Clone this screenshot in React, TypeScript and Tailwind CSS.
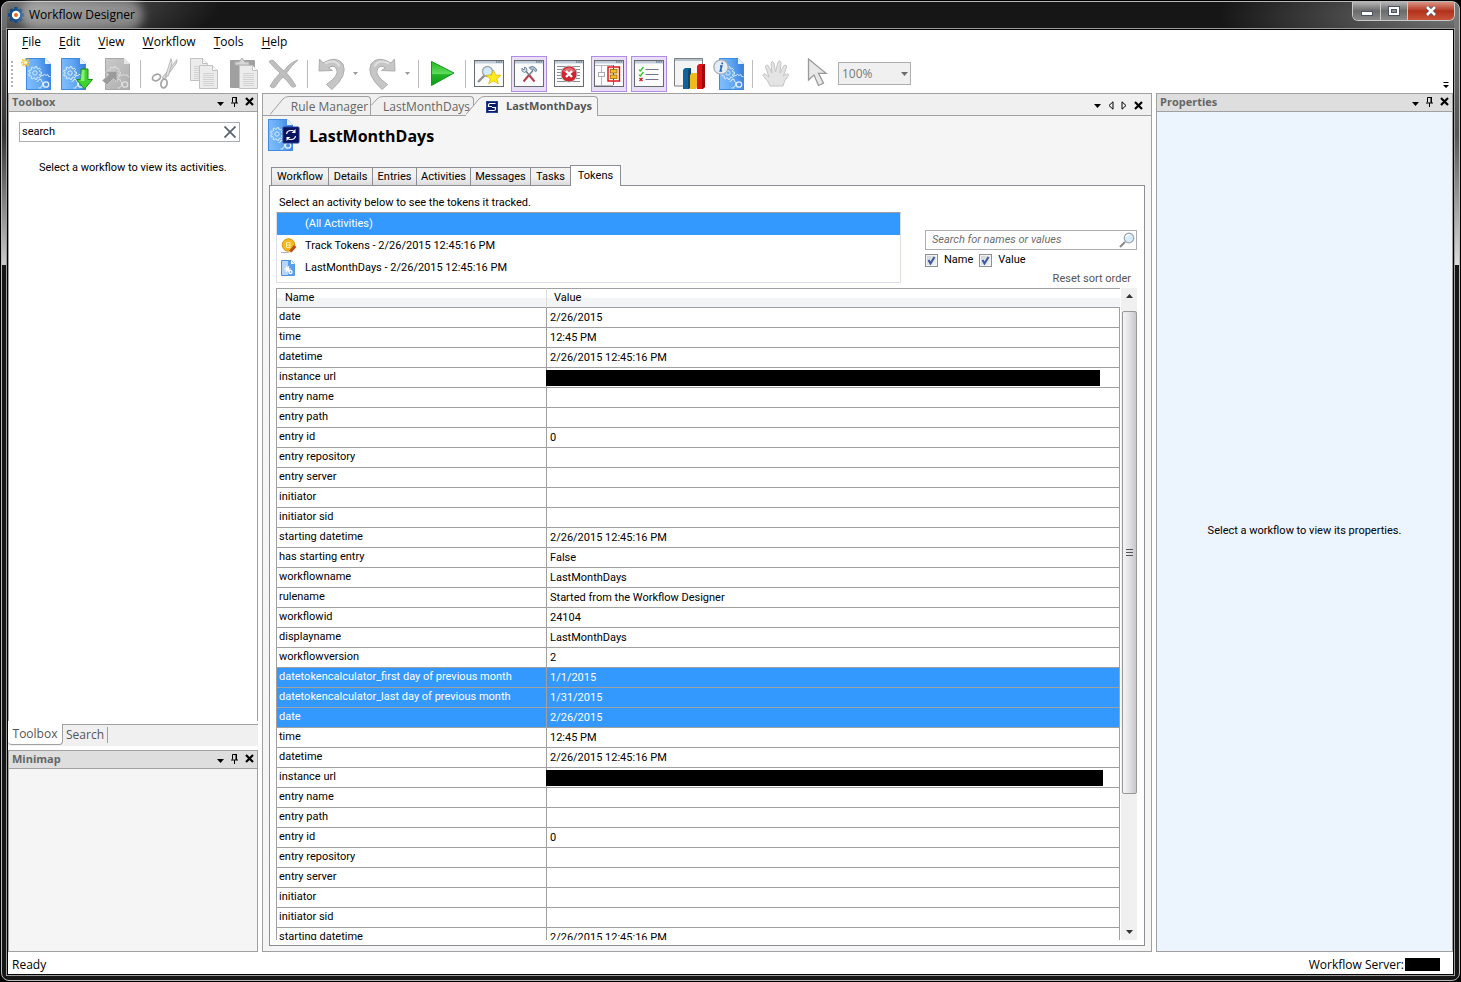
import React from 'react';

type TokenRow = { name: string; value?: string; redacted?: 'short' | 'long'; selected?: boolean };

const startRows: TokenRow[] = [
  { name: 'date', value: '2/26/2015' },
  { name: 'time', value: '12:45 PM' },
  { name: 'datetime', value: '2/26/2015 12:45:16 PM' },
  { name: 'instance url', redacted: 'short' },
  { name: 'entry name' },
  { name: 'entry path' },
  { name: 'entry id', value: '0' },
  { name: 'entry repository' },
  { name: 'entry server' },
  { name: 'initiator' },
  { name: 'initiator sid' },
  { name: 'starting datetime', value: '2/26/2015 12:45:16 PM' },
  { name: 'has starting entry', value: 'False' },
  { name: 'workflowname', value: 'LastMonthDays' },
  { name: 'rulename', value: 'Started from the Workflow Designer' },
  { name: 'workflowid', value: '24104' },
  { name: 'displayname', value: 'LastMonthDays' },
  { name: 'workflowversion', value: '2' },
];

const rows: TokenRow[] = [
  ...startRows,
  { name: 'datetokencalculator_first day of previous month', value: '1/1/2015', selected: true },
  { name: 'datetokencalculator_last day of previous month', value: '1/31/2015', selected: true },
  { name: 'date', value: '2/26/2015', selected: true },
  { name: 'time', value: '12:45 PM' },
  { name: 'datetime', value: '2/26/2015 12:45:16 PM' },
  { name: 'instance url', redacted: 'long' },
  ...startRows.slice(4, 12),
];

const menus = ['File', 'Edit', 'View', 'Workflow', 'Tools', 'Help'];

const detailTabs = [
  { label: 'Workflow', width: 'w-[57px]' },
  { label: 'Details', width: 'w-[44px]' },
  { label: 'Entries', width: 'w-[44px]' },
  { label: 'Activities', width: 'w-[54px]' },
  { label: 'Messages', width: 'w-[60px]' },
  { label: 'Tasks', width: 'w-[40px]' },
];

/* ---------- icons ---------- */

const gearPath = (cx: number, cy: number, r: number, teeth: number) => {
  const points: string[] = [];
  for (let i = 0; i < teeth; i++) {
    [[-0.3, r - 1.5], [-0.2, r], [0.2, r], [0.3, r - 1.5]].forEach(([shift, radius]) => {
      const a = ((i + shift) / teeth) * Math.PI * 2;
      points.push(`${(cx + Math.cos(a) * radius).toFixed(2)} ${(cy + Math.sin(a) * radius).toFixed(2)}`);
    });
  }
  return `M${points.join('L')}z`;
};

const DocShape = ({ gray = false }: { gray?: boolean }) => (
  <g>
    <defs>
      <linearGradient id="docBlue" x1="0" y1=".3" x2="1" y2=".1">
        <stop offset="0" stopColor="#7dbcfc" />
        <stop offset=".5" stopColor="#5fa5f2" />
        <stop offset="1" stopColor="#2f78dc" />
      </linearGradient>
      <linearGradient id="docGray" x1="0" y1="0" x2="1" y2="1">
        <stop offset="0" stopColor="#cbcbcb" />
        <stop offset="1" stopColor="#acacac" />
      </linearGradient>
    </defs>
    <path d="M0 0h19l6 6v26H0z" fill={gray ? 'url(#docGray)' : 'url(#docBlue)'} />
    <path d="M.5 31.500V.5H19M24.500 6.500v25H.5" fill="none" stroke={gray ? '#a9a9a9' : '#3f8ae2'} />
    <path d="M19 0l6 6h-6z" fill={gray ? '#e6e6e6' : '#e4f1ff'} />
    <g fill="none" stroke={gray ? '#e0e0e0' : '#e2f0ff'} strokeWidth=".9">
      <path d={gearPath(9, 15, 6.500, 9)} />
      <circle cx="9" cy="15" r="2.200" />
      <path d="M14.500 19l.5-2 2 .8 1.200-1.600 1.800 1.300 1.800-1 .8 2 1.900.2" />
      <path d="M10.500 23.500l2-.5.5-1.800 2.200.3.300 2 1.500 1-.8 1.500.8 1.700-1.900.8-.6 1.700-2-.3" />
      <circle cx="20" cy="26.500" r="2.700" strokeWidth="1.300" />
    </g>
  </g>
);

const NewIcon = () => (
  <svg width="32" height="32" viewBox="0 0 32 32">
    <g transform="translate(5 0)"><DocShape /></g>
    <path d="M4.500 0v9M0 4.500h9M1.300 1.300l6.400 6.400M7.700 1.300L1.300 7.700" stroke="#f0c43c" strokeWidth="1.6" />
    <circle cx="4.500" cy="4.500" r="1.800" fill="#fff3b0" />
  </svg>
);

const DownloadIcon = () => (
  <svg width="32" height="32" viewBox="0 0 32 32">
    <DocShape />
    <path d="M20 11h7v10.500h4.500L23.500 31 15.500 21.500H20z" fill="#3fd32e" stroke="#1d8f1a" />
    <path d="M21 12h2.500v11h-4z" fill="#8af070" />
  </svg>
);

const ExportIcon = () => (
  <svg width="32" height="32" viewBox="0 0 32 32">
    <g transform="translate(4 0)"><DocShape gray /></g>
    <path d="M4 14l12-1v11l-3.500-3.500-6.500 6.500-4.500-4.500 6.500-6z" fill="#9b9b9b" stroke="#c4c4c4" />
  </svg>
);

const CutIcon = () => (
  <svg width="32" height="32" viewBox="0 0 32 32" fill="none">
    <path d="M14 20L29 1.500l-.5 3.500L17 21z" fill="#d9d9d9" stroke="#ababab" strokeWidth=".8" />
    <path d="M17.500 18.500L23 .5l1 4-3.500 13z" fill="#e4e4e4" stroke="#ababab" strokeWidth=".8" />
    <ellipse cx="8.500" cy="19.500" rx="4.200" ry="3" transform="rotate(-25 8.500 19.500)" stroke="#a6a6a6" strokeWidth="1.800" />
    <ellipse cx="16" cy="25.500" rx="3" ry="4.500" transform="rotate(12 16 25.500)" stroke="#a6a6a6" strokeWidth="1.800" />
  </svg>
);

const Sheet = ({ x, y, w, h }: { x: number; y: number; w: number; h: number }) => (
  <g transform={`translate(${x} ${y})`}>
    <path d={`M.5.5h${w - 6}l5 5v${h - 6}H.5z`} fill="#ececec" stroke="#c2c2c2" />
    <path d={`M${w - 5.500}.5v5h5`} fill="#f8f8f8" stroke="#c2c2c2" />
    {[8, 10, 12, 14, 16, 18, 20].filter((n) => n < h - 2).map((n) => (
      <path key={n} d={`M4 ${n}.5h${w - 8}`} stroke="#d2d2d2" />
    ))}
  </g>
);

const CopyIcon = () => (
  <svg width="32" height="32" viewBox="0 0 32 32">
    <Sheet x={2} y={0} w={18} h={23} />
    <Sheet x={11} y={7} w={19} h={24} />
  </svg>
);

const PasteIcon = () => (
  <svg width="32" height="32" viewBox="0 0 32 32">
    <rect x="2" y="2" width="25" height="28" rx="1" fill="#a0a0a0" />
    <path d="M7 7V4h4l3-4 3 4h4v3z" fill="#d6d6d6" stroke="#b0b0b0" />
    <Sheet x={11} y={7} w={19} h={24} />
  </svg>
);

const DeleteIcon = () => (
  <svg width="32" height="32" viewBox="0 0 32 32">
    <path d="M1 3.500q3-2.500 5-.5 5 6 10 10Q22 4 30 2q-6 5-11.500 13Q24 21 28 28q-3 2.500-5 0-4-6-8-9-5 5-8 10-3 2-5-1 4-7 10-13Q6 10 1 3.500z" fill="#bebebe" stroke="#b2b2b2" />
  </svg>
);

const UndoIcon = ({ flip = false }: { flip?: boolean }) => (
  <svg width="32" height="32" viewBox="0 0 32 32">
    <g transform={flip ? 'matrix(-1 0 0 1 32 0)' : undefined}>
      <path d="M4.500 1l3.500 4Q21-3 28 6q5 11-11 25.500l-5.500-5Q25 17 21.500 11q-3-5-8-1l4 2.500L4 13z" fill="#c6c6c6" stroke="#adadad" />
      <path d="M10 5.500q11-5 14.500 3" stroke="#e0e0e0" strokeWidth="2" fill="none" />
    </g>
  </svg>
);

const PlayIcon = () => (
  <svg width="26" height="28" viewBox="0 0 26 28">
    <defs>
      <linearGradient id="play" x1="0" y1="0" x2="0" y2="1">
        <stop offset="0" stopColor="#22b522" />
        <stop offset=".5" stopColor="#5fdc5c" />
        <stop offset=".55" stopColor="#21b428" />
        <stop offset="1" stopColor="#0f9a1c" />
      </linearGradient>
    </defs>
    <path d="M2.500 1.500L25 13 2.500 25.500z" fill="url(#play)" stroke="#139a1d" />
  </svg>
);

const WindowIcon = ({ children }: { children?: React.ReactNode }) => (
  <svg width="32" height="32" viewBox="0 0 32 32">
    <rect x="1.500" y="2.500" width="29" height="26" fill="#fcfcfc" stroke="#666b70" />
    <path d="M2 3h28v2H2z" fill="#c3ccd6" />
    <path d="M2 5.500h28" stroke="#dfe5ec" />
    <path d="M23 4h1.500m.8 0h1.500m.8 0h1.500" stroke="#3c5675" strokeWidth="1.200" />
    {children}
  </svg>
);

const Magnifier = () => (
  <svg width="16" height="16" viewBox="0 0 16 16">
    <path d="M1 15l5-5" stroke="#8b8b8b" strokeWidth="2.200" />
    <circle cx="10" cy="6" r="4.800" fill="#d8ecfb" stroke="#9aa5b1" strokeWidth="1.2" />
    <path d="M7 5q1-2.500 4-2" stroke="#fff" fill="none" strokeWidth="1.3" />
  </svg>
);

const FindWindowIcon = () => (
  <WindowIcon>
    <path d="M5 24l7-7" stroke="#909090" strokeWidth="2.400" />
    <circle cx="14.500" cy="13.500" r="5" fill="#d3eafb" stroke="#9aa7b5" strokeWidth="1.400" />
    <path d="M20.500 12l2 5 5.500.3-4.200 3.500 1.500 5-4.800-3-4.800 3 1.500-5L13 17.300l5.500-.3z" fill="#ffeb1c" stroke="#e0bd00" strokeWidth=".8" />
  </WindowIcon>
);

const ToolsWindowIcon = () => (
  <WindowIcon>
    <path d="M10.500 23.500l6-7" stroke="#b93a4a" strokeWidth="2" />
    <path d="M16.500 16.500l3.500-4" stroke="#6d7b8a" strokeWidth="1.500" />
    <path d="M21.500 23.500l-5-6" stroke="#b93a4a" strokeWidth="2" />
    <path d="M16.500 17.500L12 12" stroke="#6d7b8a" strokeWidth="1.500" />
    <path d="M16 9.500q4-2.500 6.500.5l1.500 2.500-1.500 1.200-2-2.200-1.500 1z" fill="#a9bfd3" stroke="#5d7287" strokeWidth=".8" />
    <path d="M9 10v3l2.500 1.500 2.500-1.500-.5-3-2-1v2.500h-1.500z" fill="#d5dfe9" stroke="#5d7287" strokeWidth=".8" />
  </WindowIcon>
);

const ErrorWindowIcon = () => (
  <WindowIcon>
    <path d="M4 8.500h23M4 11.500h23M4 14.500h23M4 17.500h23M4 20.500h23M4 23.500h23" stroke="#8c9096" />
    <circle cx="16" cy="16" r="8" fill="#cf2430" stroke="#b8b8b8" />
    <path d="M9.500 13q6.500-7 13 0-6.500 4-13 0z" fill="#ee8c8c" opacity=".7" />
    <path d="M13 13l6 6m0-6l-6 6" stroke="#fff" strokeWidth="2.400" />
  </WindowIcon>
);

const MapWindowIcon = () => (
  <WindowIcon>
    <path d="M2 7.500h18M8.500 7v8m0 4v8M2 27.500h18" stroke="#b4b7bb" fill="none" />
    <path d="M20.500 7v20" stroke="#6a66a8" />
    <rect x="5.500" y="14.500" width="6" height="4" fill="#fff" stroke="#a9adb3" />
    <rect x="15" y="9" width="11.500" height="14" fill="#fdf4e0" stroke="#e30613" strokeWidth="1.400" />
    <path d="M20.500 9.800v12.500" stroke="#3d3d8e" />
    <rect x="17.500" y="11.500" width="6.500" height="3.500" fill="#f3bd2a" stroke="#9c6a00" strokeWidth=".8" />
    <rect x="17.500" y="17" width="6.500" height="3.500" fill="#f3bd2a" stroke="#9c6a00" strokeWidth=".8" />
  </WindowIcon>
);

const ListWindowIcon = () => (
  <WindowIcon>
    <path d="M12.500 11.500h13M12.500 16.500h13M12.500 21.500h13" stroke="#77708f" />
    <path d="M6 11.500l1.200 1.500L10.500 9M6 16.500l1.200 1.500L10.500 14" stroke="#25c81d" strokeWidth="1.200" fill="none" />
    <path d="M6.500 20l3 3M9.500 20l-3 3" stroke="#d8141c" strokeWidth="1.300" />
  </WindowIcon>
);

const ChartIcon = () => (
  <svg width="34" height="32" viewBox="0 0 34 32">
    <path d="M2.500.5h28V28h-28z" fill="#f4f4f4" stroke="#7a8086" />
    <path d="M3 1h27v2H3z" fill="#b9c4cf" />
    <path d="M11 12l2-2h6v19l-2 2h-6z" fill="#0e639c" />
    <path d="M16 12l3-2v19l-3 2z" fill="#0a4770" />
    <path d="M18 17l2-2h5v14l-1 2h-6z" fill="#f0b91c" />
    <path d="M25 8l2-2h6v23l-2 2h-6z" fill="#e31219" />
    <path d="M30 8l3-2v23l-3 2z" fill="#9c0b10" />
  </svg>
);

const InfoIcon = () => (
  <svg width="32" height="32" viewBox="0 0 32 32">
    <g transform="translate(6 0)"><DocShape /></g>
    <circle cx="8" cy="9" r="7.200" fill="#e4ecf4" stroke="#a5adb5" strokeWidth="1.300" />
    <path d="M9.200 4.500v1.800M7 8.200h1.700L7.300 13h1.800" stroke="#2569b3" strokeWidth="1.700" fill="none" />
  </svg>
);

const HandIcon = () => (
  <svg width="30" height="30" viewBox="0 0 30 30">
    <path d="M9 27Q7 21 2.500 17.500q-1.500-3 1.500-2.500l4 3L4.500 8q.3-2.800 2.700-1.500L11 14 10 4q1-3 3 0l1.500 9L17 3q2-2.500 3 .5L19 14l4-7.500q2.500-1.200 2.500 1.500L22.500 17l3-2q3-.5 1.500 2.500Q23 21 22 27z" fill="#e4e4e4" stroke="#c4c4c4" />
  </svg>
);

const PointerIcon = () => (
  <svg width="24" height="32" viewBox="0 0 24 32">
    <path d="M4.500 1v21l5.500-5 4.500 10.500 5-2.200-5-10H22z" fill="#e8e8e8" stroke="#999" strokeWidth="1.300" />
  </svg>
);

const AppIcon = () => (
  <svg width="16" height="16" viewBox="0 0 16 16">
    <g fill="#0f4c88">
      <circle cx="8" cy="8" r="6.200" />
      {[0, 45, 90, 135].map((a) => (
        <rect key={a} x="6.300" y="0" width="3.400" height="16" transform={`rotate(${a} 8 8)`} />
      ))}
    </g>
    <circle cx="8" cy="8" r="4.200" fill="#fff" />
    <circle cx="8" cy="8" r="2" fill="#e8641b" />
  </svg>
);

const SyncIcon = () => (
  <svg width="12" height="12" viewBox="0 0 12 12">
    <rect width="12" height="12" rx="1" fill="#0a1c66" />
    <rect x=".5" y=".5" width="11" height="11" rx="1" fill="none" stroke="#25459b" />
    <path d="M9.500 2.500H4q-1.500 0-1.500 1.500v1.500H6M2.500 9.500H8q1.500 0 1.500-1.500V6.500H6" stroke="#fff" strokeWidth="1.200" fill="none" />
  </svg>
);

const WorkflowBadge = () => (
  <svg width="32" height="34" viewBox="0 0 32 34" className="shrink-0">
    <DocShape />
    <rect x="15" y="8" width="16" height="16" rx="1" fill="#0a1460" stroke="#1d3990" />
    <path d="M18.500 15q.5-3.500 4.500-3.500h2.500M27.500 17q-.5 3.500-4.500 3.500h-2.500" stroke="#fff" strokeWidth="1.200" fill="none" />
    <path d="M27.500 10v4H23.500zM18.500 22v-4h4z" fill="#fff" />
  </svg>
);

const TokenIcon = () => (
  <svg width="16" height="16" viewBox="0 0 16 16">
    <path d="M0 14.500h8" stroke="#b5b5b5" />
    <circle cx="7.500" cy="7" r="6.300" fill="#f6b81d" stroke="#d39a10" />
    <path d="M5.500 4.500h3.500v5H5.500zM5.500 7H9" stroke="#fff0b0" fill="none" />
    <path d="M8 13l5-6 2.500 2-5 5.500z" fill="#b9501c" />
    <path d="M8 13l2.500 1.500-3 .8z" fill="#f4ddb8" />
  </svg>
);

const SmallDocIcon = () => (
  <svg width="14" height="16" viewBox="0 0 14 16">
    <path d="M.5.5H10L13.500 4v11.500H.5z" fill="#b5d6f8" stroke="#4a90dc" />
    <path d="M7 .5h3L13.500 4v11.500H7z" fill="#5b9fe8" />
    <path d="M10 .5V4h3.500z" fill="#fff" />
    <path d={gearPath(6.500, 9, 3.200, 6)} fill="#fff" />
    <circle cx="9.500" cy="12" r="2.200" fill="#fff" />
    <circle cx="9.500" cy="12" r=".8" fill="#3b82d6" />
  </svg>
);

const DownArrow = ({ color = '#000' }: { color?: string }) => (
  <svg width="7" height="4" viewBox="0 0 7 4"><path d="M0 0h7L3.500 4z" fill={color} /></svg>
);

const CrossIcon = () => (
  <svg width="9" height="9" viewBox="0 0 9 9"><path d="M1 1l7 7M8 1L1 8" stroke="#000" strokeWidth="2.200" /></svg>
);

/* ---------- pieces ---------- */

const PanelHeader: React.FC<{ title: string }> = ({ title }) => (
  <div className="flex h-[19px] shrink-0 items-center border border-[#a0a0a0] bg-[#dedede] pr-[3px] pb-[2px] pl-[3px]">
    <h2 className="flex-1 text-[11px] leading-4 font-bold text-[#666]">{title}</h2>
    <div className="flex items-center gap-[6px]">
      <button type="button" aria-label={`${title} options`} className="pt-1"><DownArrow /></button>
      <button type="button" aria-label={`Pin ${title}`}>
        <svg width="9" height="10" viewBox="0 0 9 10">
          <path d="M2.500 5.500v-5h4v5M1 6h7M4.500 6v4" stroke="#000" fill="none" />
          <path d="M5.500 0h1.500v6H5.500z" />
        </svg>
      </button>
      <button type="button" aria-label={`Close ${title}`}><CrossIcon /></button>
    </div>
  </div>
);

const ToolButton: React.FC<{ label: string; active?: boolean; children: React.ReactNode }> = ({ label, active, children }) => (
  <button
    type="button"
    aria-label={label}
    className={`flex size-9 shrink-0 items-center justify-center ${active ? 'border border-[#b18ce6] bg-[#e8def5]' : ''}`}
  >
    {children}
  </button>
);

const Separator = () => (
  <div className="flex w-[3px] shrink-0 justify-center"><div className="h-7 w-px bg-[#bcbcbc]" /></div>
);

const HistoryArrow: React.FC<{ label: string }> = ({ label }) => (
  <button type="button" aria-label={label} className="flex w-2 shrink-0 justify-start">
    <svg width="5" height="3" viewBox="0 0 5 3"><path d="M0 0h5L2.500 3z" fill="#999" /></svg>
  </button>
);

const TitleBar = () => (
  <header className="flex h-[26px] shrink-0 items-center justify-between">
    <div className="flex items-center gap-[5px] pl-[2px]">
      <AppIcon />
      <h1 className="rounded-full bg-white/40 text-xs leading-4 text-black shadow-[0_0_10px_8px_rgba(255,255,255,0.4)]">Workflow Designer</h1>
    </div>
    <div className="flex h-[19px] self-start overflow-hidden rounded-b-md border border-t-0 border-[#c9c9c9]">
      <button type="button" aria-label="Minimize" className="flex w-7 items-center justify-center border-r border-[#c9c9c9] bg-linear-to-b from-[#b5b5b5] via-[#6a6a6a] via-50% to-[#8a8a8a] pt-1">
        <svg width="12" height="5" viewBox="0 0 12 5"><rect x=".5" y=".5" width="11" height="4" fill="#fff" stroke="#4b5260" /></svg>
      </button>
      <button type="button" aria-label="Maximize" className="flex w-[27px] items-center justify-center border-r border-[#c9c9c9] bg-linear-to-b from-[#b5b5b5] via-[#6a6a6a] via-50% to-[#8a8a8a]">
        <svg width="12" height="10" viewBox="0 0 12 10">
          <rect x=".5" y=".5" width="11" height="9" fill="#fff" stroke="#4b5260" />
          <rect x="3.500" y="3.500" width="5" height="3" fill="#8d8d8d" stroke="#4b5260" />
        </svg>
      </button>
      <button type="button" aria-label="Close" className="flex w-[46px] items-center justify-center bg-linear-to-b from-[#d99384] via-[#b3301a] via-50% to-[#c9533a]">
        <svg width="12" height="10" viewBox="0 0 12 10">
          <path d="M2 1l8 8M10 1L2 9" stroke="#4b5260" strokeWidth="4" />
          <path d="M2 1l8 8M10 1L2 9" stroke="#fff" strokeWidth="2.500" />
        </svg>
      </button>
    </div>
  </header>
);

const Toolbar = () => (
  <div className="flex h-[39px] shrink-0 items-center gap-1 bg-white pl-[3px]">
    <div className="mr-[1px] h-[26px] w-[3px] shrink-0 border-l-2 border-dotted border-[#b4b4b4]" />
    <ToolButton label="New workflow"><NewIcon /></ToolButton>
    <ToolButton label="Download workflow"><DownloadIcon /></ToolButton>
    <ToolButton label="Publish"><ExportIcon /></ToolButton>
    <Separator />
    <ToolButton label="Cut"><CutIcon /></ToolButton>
    <ToolButton label="Copy"><CopyIcon /></ToolButton>
    <ToolButton label="Paste"><PasteIcon /></ToolButton>
    <ToolButton label="Delete"><DeleteIcon /></ToolButton>
    <Separator />
    <ToolButton label="Undo"><UndoIcon /></ToolButton>
    <HistoryArrow label="Undo history" />
    <ToolButton label="Redo"><UndoIcon flip /></ToolButton>
    <HistoryArrow label="Redo history" />
    <Separator />
    <ToolButton label="Run"><PlayIcon /></ToolButton>
    <Separator />
    <ToolButton label="Search pane"><FindWindowIcon /></ToolButton>
    <ToolButton label="Toolbox pane" active><ToolsWindowIcon /></ToolButton>
    <ToolButton label="Errors pane"><ErrorWindowIcon /></ToolButton>
    <ToolButton label="Minimap pane" active><MapWindowIcon /></ToolButton>
    <ToolButton label="Properties pane" active><ListWindowIcon /></ToolButton>
    <ToolButton label="Statistics"><ChartIcon /></ToolButton>
    <ToolButton label="Workflow information"><InfoIcon /></ToolButton>
    <Separator />
    <ToolButton label="Pan"><HandIcon /></ToolButton>
    <ToolButton label="Select"><PointerIcon /></ToolButton>
    <div className="relative flex items-center">
      <select aria-label="Zoom" disabled className="h-[23px] w-[73px] appearance-none border border-[#adadad] bg-[#f0f0f0] pl-[3px] text-xs text-[#7a7a7a]">
        <option>100%</option>
      </select>
      <span className="pointer-events-none absolute right-[3px]"><DownArrow color="#6d6d6d" /></span>
    </div>
    <button type="button" aria-label="Toolbar options" className="mr-1 mb-1 ml-auto self-end">
      <svg width="6" height="7" viewBox="0 0 6 7"><path d="M.5 0h5v1h-5zM0 3h6L3 6z" /></svg>
    </button>
  </div>
);

const LeftColumn = () => (
  <aside className="flex w-[250px] shrink-0 flex-col">
    <section className="flex min-h-0 flex-1 flex-col">
      <PanelHeader title="Toolbox" />
      <div className="flex-1 border-r border-l border-[#a0a0a0] bg-white px-[10px] pt-[10px] font-[Roboto,'Liberation_Sans',sans-serif]">
        <div className="flex h-5 w-[221px] items-center border border-[#abadb3] pr-[3px] pl-[2px]">
          <input aria-label="Search activities" defaultValue="search" className="min-w-0 flex-1 text-[11px] leading-4 outline-none" />
          <button type="button" aria-label="Clear search">
            <svg width="12" height="12" viewBox="0 0 12 12"><path d="M.5.5l11 11M11.500.5l-11 11" stroke="#5a6470" strokeWidth="1.800" /></svg>
          </button>
        </div>
        <p className="pt-[18px] pl-5 text-[11px] leading-4">Select a workflow to view its activities.</p>
      </div>
    </section>
    <div role="tablist" className="mt-[3px] mb-1 flex h-[22px] shrink-0 bg-[#f0f0f0] text-xs text-[#555]">
      <button type="button" role="tab" aria-selected="true" className="mb-px w-[55px] rounded-b border-r border-b border-[#a0a0a0] bg-white">Toolbox</button>
      <div className="flex flex-1 items-center border-t border-[#a0a0a0]">
        <button type="button" role="tab" aria-selected="false" className="mb-px h-4 w-[45px] border-r border-[#a0a0a0] leading-4">Search</button>
      </div>
    </div>
    <section className="flex h-[202px] shrink-0 flex-col">
      <PanelHeader title="Minimap" />
      <div className="flex-1 border border-t-0 border-[#a0a0a0] bg-[#f5f5f5]" />
    </section>
  </aside>
);

const DocumentTabs = () => (
  <div className="flex h-[22px] shrink-0 items-end border-b border-[#a0a0a0] bg-[#f0f0f0] pl-[7px] text-xs text-[#666]">
    <button type="button" className="flex h-[19px] items-stretch">
      <svg width="19" height="19" viewBox="0 0 19 19"><path d="M0 18.500L13 3Q15 .5 19 .5" fill="none" stroke="#a0a0a0" /></svg>
      <span className="w-[82px] rounded-tr border-t border-r border-[#a0a0a0] text-center leading-5">Rule Manager</span>
    </button>
    <button type="button" className="flex h-[19px] items-stretch">
      <svg width="12" height="19" viewBox="0 0 12 19"><path d="M0 9.500L6 3Q8 .5 12 .5" fill="none" stroke="#a0a0a0" /></svg>
      <span className="w-[91px] rounded-tr border-t border-r border-[#a0a0a0] text-left leading-5">LastMonthDays</span>
    </button>
    <button type="button" className="-mb-px -ml-2 flex h-5 items-stretch">
      <svg width="19" height="20" viewBox="0 0 19 20"><path d="M0 19L13 3Q15 .5 19 .5V20H0z" fill="#f5f5f5" /><path d="M0 18.500L13 3Q15 .5 19 .5" fill="none" stroke="#a0a0a0" /></svg>
      <span className="flex w-[113px] items-center gap-2 rounded-tr border-t border-r border-[#a0a0a0] bg-[#f5f5f5] pl-px text-[11px] font-bold text-[#555]">
        <SyncIcon />
        LastMonthDays
      </span>
    </button>
    <div className="ml-auto flex items-center gap-[7px] self-center pt-[2px] pr-2">
      <button type="button" aria-label="Document list"><DownArrow /></button>
      <button type="button" aria-label="Scroll tabs left"><svg width="6" height="9" viewBox="0 0 6 9"><path d="M5 .8v7.400L1 4.500z" fill="none" stroke="#000" /></svg></button>
      <button type="button" aria-label="Scroll tabs right"><svg width="6" height="9" viewBox="0 0 6 9"><path d="M1 .8v7.400L5 4.500z" fill="none" stroke="#000" /></svg></button>
      <button type="button" aria-label="Close document"><CrossIcon /></button>
    </div>
  </div>
);

const ActivityPicker = () => (
  <div className="w-[625px] shrink-0">
    <p className="pb-[1px] pl-[3px] leading-4">Select an activity below to see the tokens it tracked.</p>
    <ul className="h-[71px] border border-t-[#a0a0a0] border-r-[#dde0ea] border-b-[#dde0ea] border-l-[#dde0ea] leading-[22px]">
      <li className="flex h-[22px] items-center bg-[#3399ff] pl-7 text-white">(All Activities)</li>
      <li className="flex h-[22px] items-center pl-1"><span className="w-6"><TokenIcon /></span>Track Tokens - 2/26/2015 12:45:16 PM</li>
      <li className="flex h-[22px] items-center pl-1"><span className="w-6"><SmallDocIcon /></span>LastMonthDays - 2/26/2015 12:45:16 PM</li>
    </ul>
  </div>
);

const CheckField: React.FC<{ label: string }> = ({ label }) => (
  <label className="flex items-center gap-[6px]">
    <span className="relative flex size-[13px]">
      <input type="checkbox" defaultChecked className="size-[13px] appearance-none border border-[#8e8f8f] bg-linear-to-br from-[#c9d0d8] to-[#f6f6f6] shadow-[inset_0_0_0_1px_#f4f4f4]" />
      <svg width="13" height="13" viewBox="0 0 13 13" className="pointer-events-none absolute inset-0"><path d="M3.500 6l2 3.500L9.500 3" stroke="#3c56a0" strokeWidth="2" fill="none" /></svg>
    </span>
    {label}
  </label>
);

const TokenFilter = () => (
  <div className="w-[212px] shrink-0 pt-[35px]">
    <div className="flex h-5 items-center border border-[#abadb3] pr-[1px] pl-[6px]">
      <input aria-label="Search tokens" placeholder="Search for names or values" className="min-w-0 flex-1 italic outline-none placeholder:text-[#6d6d6d]" />
      <button type="button" aria-label="Search"><Magnifier /></button>
    </div>
    <div className="flex h-[21px] items-center gap-[6px]">
      <CheckField label="Name" />
      <CheckField label="Value" />
    </div>
    <div className="flex h-[17px] justify-end pr-[6px]"><button type="button" className="h-4 leading-4 text-[#555]">Reset sort order</button></div>
  </div>
);

const TokenTable = () => (
  <div className="flex min-h-0 flex-1 gap-px">
    <div className="min-w-0 flex-1 overflow-hidden">
      <table className="w-full table-fixed border-separate border-spacing-0 border-l border-[#a0a0a0]">
        <thead>
          <tr className="bg-linear-to-b from-white from-50% to-[#f3f4f6] to-50%">
            <th className="h-5 w-[270px] border-t border-r border-b border-[#a0a0a0] border-r-[#dcdcdc] pl-2 text-left leading-4 font-normal">Name</th>
            <th className="h-5 border-t border-b border-[#a0a0a0] pl-[7px] text-left leading-4 font-normal">Value</th>
          </tr>
        </thead>
        <tbody>
          {rows.map((row, idx) => (
            <tr key={idx} className={row.selected ? 'bg-[#3399ff] text-white' : 'bg-white'}>
              <td className="h-5 border-r border-b border-[#a0a0a0] pb-[2px] pl-[2px] leading-4">{row.name}</td>
              <td className="h-5 border-r border-b border-[#a0a0a0] p-0 leading-4">
                {row.redacted
                  ? <div className={`-ml-px h-4 bg-black ${row.redacted === 'short' ? 'mr-[19px]' : 'mr-4'}`} />
                  : <span className="pl-[3px]">{row.value}</span>}
              </td>
            </tr>
          ))}
        </tbody>
      </table>
    </div>
    <div className="flex w-4 shrink-0 flex-col items-center bg-[#f0f0f0]">
      <button type="button" aria-label="Scroll up" className="flex h-[23px] items-center pb-2">
        <svg width="7" height="4" viewBox="0 0 7 4"><path d="M0 4h7L3.500 0z" fill="#333" /></svg>
      </button>
      <div className="flex h-[483px] w-[15px] items-center justify-center rounded-xs border border-[#979797] bg-linear-to-r from-[#f4f4f4] via-[#e4e4e6] via-45% to-[#c6c7cb]">
        <svg width="7" height="8" viewBox="0 0 7 8"><path d="M0 .5h7M0 3.500h7M0 6.500h7" stroke="#555" /></svg>
      </div>
      <button type="button" aria-label="Scroll down" className="mt-auto flex h-4 items-center"><DownArrow color="#333" /></button>
    </div>
  </div>
);

const DocumentArea = () => (
  <main className="flex min-w-0 flex-1 flex-col border border-[#a0a0a0] bg-[#f5f5f5]">
    <DocumentTabs />
    <div className="flex h-[49px] shrink-0 items-start gap-[9px] pt-[3px] pl-[5px]">
      <WorkflowBadge />
      <h2 className="pt-[5px] text-base leading-6 font-bold text-black">LastMonthDays</h2>
    </div>
    <div className="flex min-h-0 flex-1 flex-col pr-[6px] pb-[5px] pl-[6px] font-[Roboto,'Liberation_Sans',sans-serif] text-[11px]">
      <div role="tablist" className="z-10 -mb-px flex h-[21px] shrink-0 items-end pl-[2px]">
        {detailTabs.map((tab) => (
          <button
            key={tab.label}
            type="button"
            role="tab"
            aria-selected={false}
            className={`${tab.width} h-[19px] border border-r-0 border-[#8c8e94] bg-linear-to-b from-[#f2f2f2] from-50% to-[#dcdcdc] pt-px text-center`}
          >
            {tab.label}
          </button>
        ))}
        <button type="button" role="tab" aria-selected className="h-[21px] w-[51px] border border-b-0 border-[#8c8e94] bg-white text-center">
          Tokens
        </button>
      </div>
      <div className="flex min-h-0 flex-1 flex-col border border-[#8c8e94] bg-white pt-[9px] pr-[7px] pb-[5px] pl-[6px]">
        <div className="flex shrink-0 justify-between">
          <ActivityPicker />
          <TokenFilter />
        </div>
        <TokenTable />
      </div>
    </div>
  </main>
);

const PropertiesPanel = () => (
  <aside className="flex w-[297px] shrink-0 flex-col">
    <PanelHeader title="Properties" />
    <div className="flex flex-1 items-center justify-center border border-t-0 border-[#a0a0a0] bg-[#ecf4fe] font-[Roboto,'Liberation_Sans',sans-serif] text-[11px]">
      Select a workflow to view its properties.
    </div>
  </aside>
);

export default function App() {
  return (
    <div className="h-screen bg-black p-px font-['Open_Sans','Noto_Sans',sans-serif] text-black">
      <div className="flex h-full flex-col rounded-lg border border-[#b8b8b8] bg-[#161616] bg-[radial-gradient(ellipse_220px_60px_at_0_0,#777,transparent),radial-gradient(ellipse_240px_60px_at_100%_50%,#777,transparent),linear-gradient(#666,#333_50%,#ccc),linear-gradient(#777,#555_50%,#ddd)] bg-[size:100%_28px,100%_28px,5px_263px,5px_263px] bg-[position:0_0,0_0,0_0,100%_0] bg-no-repeat px-1 pb-1">
        <TitleBar />
        <div className="flex min-h-0 flex-1 flex-col border border-[#9d9d9d]">
          <div className="flex min-h-0 flex-1 flex-col border border-black bg-white">
            <nav className="flex h-6 shrink-0 items-center gap-[18px] pl-[14px] text-xs">
              {menus.map((menu) => (
                <button key={menu} type="button"><span className="underline underline-offset-2">{menu[0]}</span>{menu.slice(1)}</button>
              ))}
            </nav>
            <Toolbar />
            <div className="flex min-h-0 flex-1 gap-1">
              <LeftColumn />
              <DocumentArea />
              <PropertiesPanel />
            </div>
            <footer className="flex h-[22px] shrink-0 items-center justify-between pt-[3px] pr-[13px] pl-1 text-xs">
              <span>Ready</span>
              <span className="flex items-center">Workflow Server:<span className="ml-px h-[13px] w-[35px] bg-black" /></span>
            </footer>
          </div>
        </div>
      </div>
    </div>
  );
}
